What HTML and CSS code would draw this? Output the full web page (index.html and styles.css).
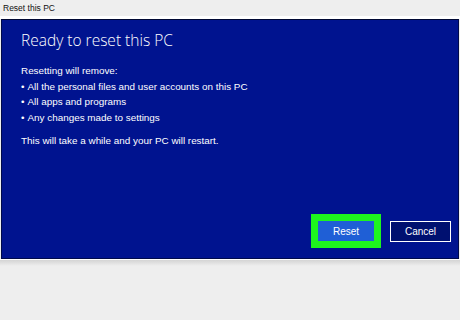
FILE: index.html
```html
<!DOCTYPE html>
<html>
<head>
<meta charset="utf-8">
<link rel="stylesheet" href="styles.css">
</head>
<body>
<div class="titlebar">Reset this PC</div>
<div class="panel">
  <h1 class="heading">Ready to reset this PC</h1>
  <div class="body">
    <p class="line">Resetting will remove:</p>
    <ul class="list">
      <li>All the personal files and user accounts on this PC</li>
      <li>All apps and programs</li>
      <li>Any changes made to settings</li>
    </ul>
    <p class="line note">This will take a while and your PC will restart.</p>
  </div>
  <div class="actions">
    <button class="btn btn-primary">Reset</button>
    <button class="btn btn-secondary">Cancel</button>
  </div>
</div>
<div class="shadow"></div>
</body>
</html>
```
FILE: styles.css
```css
html, body {
  margin: 0;
  padding: 0;
  background: #eeeeee;
  width: 460px;
  height: 320px;
  overflow: hidden;
  font-family: "Liberation Sans", Arial, sans-serif;
}
.titlebar {
  height: 16px;
  line-height: 17px;
  font-size: 8.5px;
  color: #111;
  padding-left: 3px;
  background: #eeeeee;
  border-bottom: 3px solid #ffffff;
}
.panel {
  margin-left: 1px;
  width: 456px;
  background: #00138f;
  border: 1px solid #000a4a;
  border-top-color: #000833;
  display: flex;
  flex-direction: column;
  padding: 9px 0 0 0;
  box-sizing: content-box;
  height: 229px;
  color: #ffffff;
}
.heading {
  margin: 0 0 0 19px;
  font-family: "Open Sans", "Liberation Sans", sans-serif;
  font-weight: 300;
  font-size: 15.5px;
  line-height: 22px;
}
.body {
  margin: 12px 0 0 19px;
  font-size: 9.9px;
  line-height: 15.5px;
}
.line {
  margin: 0;
}
.list {
  margin: 0;
  padding: 0;
  list-style: none;
}
.list li::before {
  content: "\2022";
  margin-right: 3px;
}
.note {
  margin-top: 8px;
}
.actions {
  margin-top: auto;
  margin-bottom: 16px;
  display: flex;
  justify-content: flex-end;
  gap: 16px;
  padding-right: 7px;
}
.btn {
  font-family: "Liberation Sans", Arial, sans-serif;
  font-size: 10px;
  color: #ffffff;
  padding: 0;
  margin: 0;
  box-sizing: border-box;
}
.btn-primary {
  width: 56px;
  height: 20px;
  background: #1f5fd6;
  border: none;
  outline: 7px solid #1ef51e;
}
.btn-secondary {
  width: 61px;
  height: 21px;
  background: #001070;
  border: 1.5px solid #ffffff;
}
.shadow {
  height: 6px;
  border-top: 1px solid #ffffff;
  background: linear-gradient(#d4d4d4, #eeeeee);
}
```
